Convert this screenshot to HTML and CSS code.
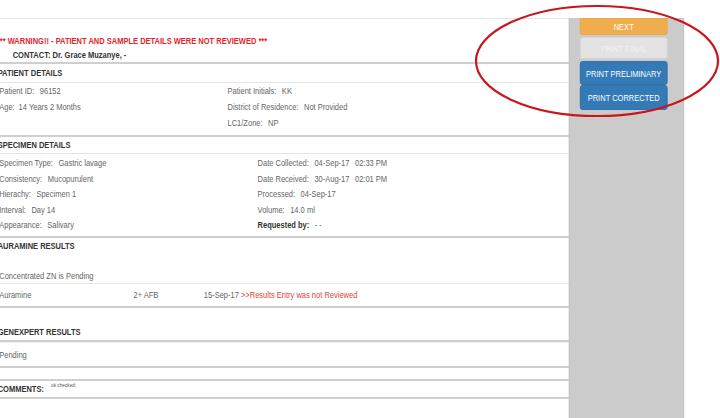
FILE: index.html
```html
<!DOCTYPE html>
<html lang="en">
<head>
<meta charset="utf-8">
<title>Report Preview</title>
<link rel="stylesheet" href="styles.css">
</head>
<body>
<div class="page">
  <div class="sheet">
    <main class="report">
      <div class="top-gap"></div>
      <div class="alert">
        <p class="warning">*** WARNING!! - PATIENT AND SAMPLE DETAILS WERE NOT REVIEWED ***</p>
        <p class="contact">CONTACT: Dr. Grace Muzanye, -</p>
      </div>

      <section class="panel patient">
        <h2 class="panel-title">PATIENT DETAILS</h2>
        <div class="panel-body cols patient-cols">
          <div class="col">
            <div class="field"><span class="lbl">Patient ID:</span><span class="val">96152</span></div>
            <div class="field"><span class="lbl">Age:</span><span class="val tight">14 Years 2 Months</span></div>
          </div>
          <div class="col">
            <div class="field"><span class="lbl">Patient Initials:</span><span class="val">KK</span></div>
            <div class="field"><span class="lbl">District of Residence:</span><span class="val">Not Provided</span></div>
            <div class="field"><span class="lbl">LC1/Zone:</span><span class="val">NP</span></div>
          </div>
        </div>
      </section>

      <section class="panel specimen">
        <h2 class="panel-title">SPECIMEN DETAILS</h2>
        <div class="panel-body cols specimen-cols">
          <div class="col">
            <div class="field"><span class="lbl">Specimen Type:</span><span class="val">Gastric lavage</span></div>
            <div class="field"><span class="lbl">Consistency:</span><span class="val">Mucopurulent</span></div>
            <div class="field"><span class="lbl">Hierachy:</span><span class="val">Specimen 1</span></div>
            <div class="field"><span class="lbl">Interval:</span><span class="val">Day 14</span></div>
            <div class="field"><span class="lbl">Appearance:</span><span class="val">Salivary</span></div>
          </div>
          <div class="col">
            <div class="field"><span class="lbl">Date Collected:</span><span class="val">04-Sep-17</span><span class="val">02:33 PM</span></div>
            <div class="field"><span class="lbl">Date Received:</span><span class="val">30-Aug-17</span><span class="val">02:01 PM</span></div>
            <div class="field"><span class="lbl">Processed:</span><span class="val">04-Sep-17</span></div>
            <div class="field"><span class="lbl">Volume:</span><span class="val">14.0 ml</span></div>
            <div class="field"><span class="lbl strong">Requested by:</span><span class="val">- -</span></div>
          </div>
        </div>
      </section>

      <section class="panel auramine">
        <h2 class="panel-title">AURAMINE RESULTS</h2>
        <div class="pending-row">Concentrated ZN is Pending</div>
        <div class="result-row">
          <span>Auramine</span>
          <span>2+ AFB</span>
          <span>15-Sep-17 <span class="flag">&gt;&gt;Results Entry was not Reviewed</span></span>
        </div>
      </section>

      <section class="panel genexpert">
        <h2 class="panel-title">GENEXPERT RESULTS</h2>
        <div class="gx-body">Pending</div>
      </section>

      <section class="comments">
        <span class="comments-title">COMMENTS:</span>
        <span class="comments-text">ok checked;</span>
      </section>
    </main>

    <aside class="sidebar">
      <button class="btn btn-next" type="button">NEXT</button>
      <button class="btn btn-disabled" type="button">PRINT FINAL</button>
      <button class="btn btn-primary first" type="button">PRINT PRELIMINARY</button>
      <button class="btn btn-primary" type="button">PRINT CORRECTED</button>
    </aside>
    <div class="right-margin"></div>
  </div>

  <svg class="highlight" width="260" height="130" viewBox="0 0 260 130" aria-hidden="true">
    <ellipse cx="128" cy="62" rx="121" ry="55" fill="none" stroke="#c8161d" stroke-width="2.2"/>
  </svg>
</div>
</body>
</html>
```

FILE: styles.css
```css
* { box-sizing: border-box; }

html, body {
  margin: 0;
  padding: 0;
  background: #ffffff;
}

body {
  font-family: "Liberation Sans", Arial, sans-serif;
  font-size: 9.5px;
  color: #666666;
}

.page {
  position: relative;
  width: 720px;
  height: 418px;
  overflow: hidden;
}

/* the captured report is horizontally compressed; lay out at full width, then squeeze */
.sheet {
  display: flex;
  width: 912px;
  height: 418px;
  transform: scaleX(0.79);
  transform-origin: 0 0;
}

.report {
  flex: 0 0 720px;
  width: 720px;
}

.top-gap {
  height: 19px;
  border-bottom: 1px solid #e4e4e4;
}

.alert {
  padding-top: 15px;
  border-bottom: 2px solid #cfcfcf;
}

.alert p {
  margin: 0;
  line-height: 14px;
  font-weight: bold;
}

.warning {
  color: #e3242b;
  text-indent: -4px;
}

.contact {
  color: #333333;
  padding-left: 16px;
}

.panel {
  border-bottom: 2px solid #cfcfcf;
}

.panel-title {
  margin: 0;
  text-indent: -3px;
  font-size: 9.5px;
  font-weight: bold;
  color: #333333;
}

.patient .panel-title {
  line-height: 18px;
  border-bottom: 1px solid #e6e6e6;
}

.specimen .panel-title {
  line-height: 16px;
  border-bottom: 1px solid #e6e6e6;
}

.cols {
  display: grid;
}

.patient-cols {
  grid-template-columns: 288px 1fr;
  padding-bottom: 4px;
}

.patient-cols .field {
  line-height: 16px;
}

.specimen-cols {
  grid-template-columns: 326px 1fr;
  padding-top: 1px;
  padding-bottom: 3.5px;
}

.specimen-cols .field {
  line-height: 15.5px;
}

.col:first-child {
  margin-left: -1px;
}

.field {
  white-space: nowrap;
}

.val {
  margin-left: 7px;
}

.val.tight {
  margin-left: 5px;
}

.lbl.strong {
  font-weight: bold;
  color: #333333;
}

.auramine .panel-title {
  line-height: 15px;
}

.pending-row {
  margin-top: 15px;
  line-height: 15px;
  border-bottom: 1px solid #e8e8e8;
  text-indent: -1px;
}

.result-row {
  display: grid;
  grid-template-columns: 170px 89px 1fr;
  line-height: 22px;
  margin-left: -1px;
  white-space: nowrap;
}

.flag {
  color: #d9433c;
}

.genexpert .panel-title {
  padding-top: 16px;
  line-height: 16px;
  border-bottom: 2px solid #cfcfcf;
}

.gx-body {
  border-top: 1px solid #eeeeee;
  padding-top: 1px;
  line-height: 22px;
  text-indent: -1px;
}

.comments {
  margin-top: 11px;
  border-top: 2px solid #cfcfcf;
  border-bottom: 2px solid #cfcfcf;
  line-height: 16px;
  display: flex;
  align-items: flex-start;
}

.comments-title {
  margin-left: -3px;
  font-weight: bold;
  color: #333333;
}

.comments-text {
  margin-left: 9px;
  font-size: 6px;
  line-height: 9px;
  color: #555555;
}

.sidebar {
  flex: 0 0 146px;
  margin-top: 18px;
  background: #cbcbcb;
  border-left: 1px solid #bdbdbd;
  border-right: 1px solid #c4c4c4;
  padding-left: 13px;
  display: flex;
  flex-direction: column;
  align-items: flex-start;
}

.right-margin {
  flex: 1 1 auto;
}

.btn {
  display: block;
  width: 111px;
  padding: 0;
  border: 1px solid transparent;
  border-radius: 3px;
  font-family: inherit;
  font-size: 9.5px;
  color: #ffffff;
  text-align: center;
  white-space: nowrap;
  cursor: pointer;
}

.btn-next {
  height: 17px;
  line-height: 15px;
  background: #f0ad4e;
  border-color: #eea43a;
  border-radius: 0 0 3px 3px;
}

.btn-disabled {
  margin-top: 2px;
  height: 22px;
  background: #e3e3e3;
  border-color: #d4d4d4;
  color: #f3f3f3;
}

.btn-primary {
  height: 25px;
  background: #337ab7;
  border-color: #2e6da4;
}

.btn-primary.first {
  margin-top: 2px;
  height: 24px;
}

.highlight {
  position: absolute;
  left: 469px;
  top: -1px;
  overflow: visible;
}
```
